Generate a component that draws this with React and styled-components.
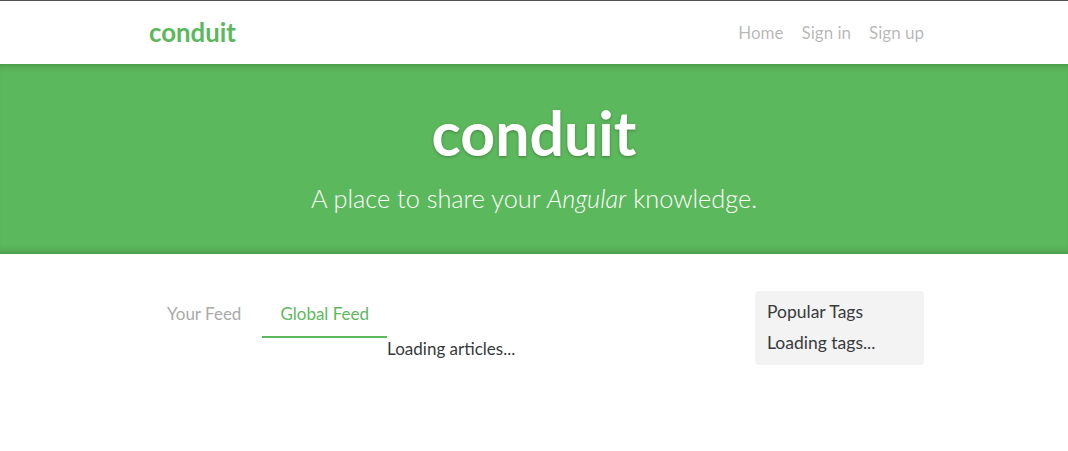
import React from 'react';
import styled, { createGlobalStyle } from 'styled-components';

const GlobalStyle = createGlobalStyle`
  html, body {
    margin: 0;
    padding: 0;
    background: #fff;
    font-family: Lato, "Open Sans", sans-serif;
    color: #373a3c;
  }
  body {
    border-top: 1px solid #4f4f4f;
  }
`;

const Container = styled.div`
  max-width: 780px;
  box-sizing: border-box;
  padding-left: 5px;
  margin: 0 auto;
`;

const Navbar = styled.nav`
  height: 63px;
  background: #fff;
  ${Container} {
    height: 100%;
    display: flex;
    align-items: center;
    justify-content: space-between;
  }
`;

const Brand = styled.a`
  font-family: Lato, sans-serif;
  font-weight: 700;
  font-size: 25.8px;
  color: #5cb85c;
  text-decoration: none;
  margin-top: -2px;
`;

const NavLinks = styled.ul`
  display: flex;
  gap: 18px;
  list-style: none;
  margin: 0;
  padding: 0;
`;

const NavLink = styled.a`
  font-size: 17px;
  color: rgba(0, 0, 0, 0.3);
  text-decoration: none;
`;

const Banner = styled.header`
  height: 190px;
  background: #5cb85c;
  box-shadow: inset 0 8px 8px -8px rgba(0, 0, 0, 0.3),
    inset 0 -8px 8px -8px rgba(0, 0, 0, 0.3);
  color: #fff;
  text-align: center;
  display: flex;
  flex-direction: column;
  align-items: center;
  padding-top: 34px;
  box-sizing: border-box;
`;

const Logo = styled.h1`
  margin: 0;
  font-family: Lato, sans-serif;
  font-weight: 700;
  font-size: 60.8px;
  line-height: 70px;
  text-shadow: 0 1px 3px rgba(0, 0, 0, 0.3);
`;

const Tagline = styled.p`
  margin: 15px 0 0;
  font-weight: 300;
  font-size: 25.3px;
  line-height: 30px;
`;

const Page = styled(Container)`
  display: grid;
  grid-template-columns: 1fr 169px;
  padding-top: 37px;
`;

const FeedRow = styled.div`
  display: flex;
  align-items: flex-start;
`;

const FeedToggle = styled.ul`
  display: flex;
  gap: 3px;
  list-style: none;
  margin: 0;
  padding: 0;
`;

const Tab = styled.li`
  padding: 13px 18px 12px;
  font-size: 17px;
  line-height: 20px;
  color: ${p => (p.$active ? '#5cb85c' : '#aaa')};
  border-bottom: 2px solid ${p => (p.$active ? '#5cb85c' : 'transparent')};
`;

const Loading = styled.div`
  padding-top: 46px;
  font-size: 17px;
  line-height: 24px;
`;

const Sidebar = styled.aside`
  align-self: start;
  background: #f3f3f3;
  border-radius: 4px;
  padding: 9px 12px 10px;
  font-size: 17.5px;
  line-height: 24px;
  p {
    margin: 0;
  }
  p + p {
    margin-top: 7px;
  }
`;

export default function App() {
  return (
    <>
      <GlobalStyle />
      <Navbar>
        <Container>
          <Brand href="#">conduit</Brand>
          <NavLinks>
            <li><NavLink href="#">Home</NavLink></li>
            <li><NavLink href="#">Sign in</NavLink></li>
            <li><NavLink href="#">Sign up</NavLink></li>
          </NavLinks>
        </Container>
      </Navbar>
      <Banner>
        <Logo>conduit</Logo>
        <Tagline>
          A place to share your <em>Angular</em> knowledge.
        </Tagline>
      </Banner>
      <Page>
        <FeedRow>
          <FeedToggle>
            <Tab>Your Feed</Tab>
            <Tab $active>Global Feed</Tab>
          </FeedToggle>
          <Loading>Loading articles...</Loading>
        </FeedRow>
        <Sidebar>
          <p>Popular Tags</p>
          <p>Loading tags...</p>
        </Sidebar>
      </Page>
    </>
  );
}
